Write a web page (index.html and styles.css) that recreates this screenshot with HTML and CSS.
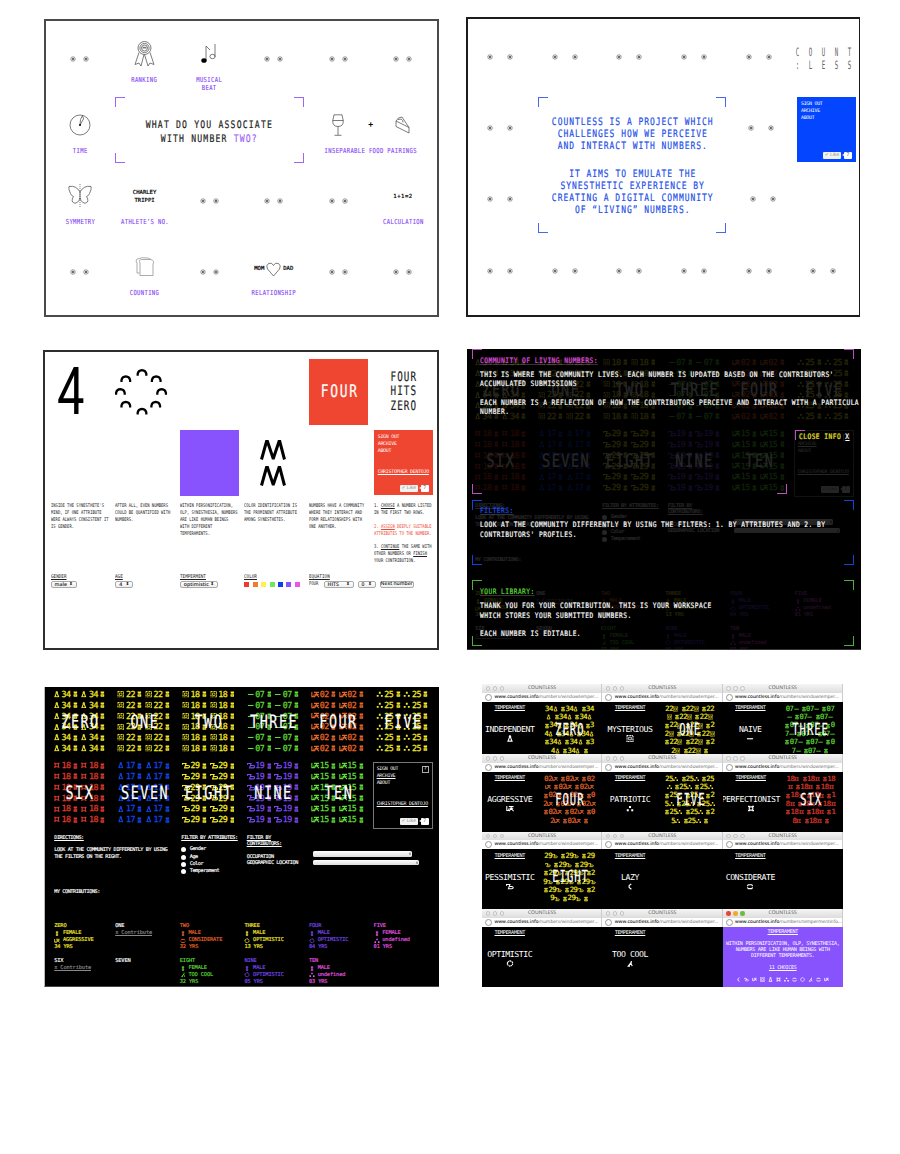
FILE: index.html
```html
<!DOCTYPE html>
<html lang="en">
<head>
<meta charset="utf-8">
<title>Countless</title>
<link rel="stylesheet" href="styles.css">
</head>
<body>
<svg class="defs" aria-hidden="true">
  <symbol id="eye" viewBox="0 0 6 6"><circle cx="3" cy="3" r="2.3" fill="#ddd" stroke="#777" stroke-width=".6"/><circle cx="3" cy="3" r="1" fill="#444"/></symbol>
  <symbol id="g-flask" viewBox="0 0 8 8"><path d="M3 1h2M3.300 1v2L1.700 7h4.600L4.700 3V1"/></symbol>
  <symbol id="g-grid" viewBox="0 0 8 8"><path d="M.600.600h6.800v6.800H.600z" stroke-dasharray="1.200 .600"/><path d="M2.500 2.500h3v3h-3z" stroke-width=".9"/></symbol>
  <symbol id="g-dash" viewBox="0 0 8 8"><path d="M.500 4.300h7"/></symbol>
  <symbol id="g-wk" viewBox="0 0 10 8"><path d="M1 1v5.500h2.500V4M3.500 1.500h6M6.500 1.500v2.500M6.500 4 3.800 7.200M6.500 4l3 3.200M4.500 3.800h4.500"/></symbol>
  <symbol id="g-dots" viewBox="0 0 8 8"><path d="M2.900 1h2.300v2.300H2.900zM.300 4.800h2.300v2.300H.300zM5.400 4.800h2.300v2.300H5.400z" fill="currentColor" stroke="none"/></symbol>
  <symbol id="g-sq" viewBox="0 0 8 8"><path d="M2 2.200h4v3.600H2zM.600 1.600h2M5.400 1.600h2M.600 6.400h2M5.400 6.400h2"/></symbol>
  <symbol id="g-yer" viewBox="0 0 10 8"><path d="M.600 3.200V1.600h4.200L3 6.800h4.200q1.800-.200 1.800-1.500T7.200 4H4"/></symbol>
  <symbol id="g-moon" viewBox="0 0 8 8"><path d="M5.500 1 3 3v2.200l2.600 2"/></symbol>
  <symbol id="g-pill" viewBox="0 0 8 8"><path d="M1 3.500 2 2h4l1 1.500M1 5l1 1.500h4L7 5"/></symbol>
  <symbol id="g-sun" viewBox="0 0 8 8"><path d="M4 .900l1.500.900 1.400.900v2.600L5.500 6.300 4 7.200l-1.500-.900-1.400-1V2.700L2.500 1.800z" stroke-dasharray="1.800 .500"/></symbol>
  <symbol id="g-cool" viewBox="0 0 8 8"><path d="M5.500 1v1.500L2 7h2M5 3.500 6.500 7"/></symbol>
  <symbol id="g-sex" viewBox="0 0 6 8"><path d="M.600 1.500h4.800M1.700 3h2.600M.600 5h4.800M.600 6.800h4.800M1.500 1v2.200M4.500 1v2.200M1.200 4.800v2M4.800 4.800v2"/></symbol>
  <symbol id="g-man" viewBox="0 0 6 8"><path d="M2 1h2v2H2zM3 3v1M2 4.600h2v2H2z"/></symbol>
</svg>

<main class="sheet">
  <section class="panel associate">
    <div class="cell"><span class="eyes"></span></div>
    <div class="cell">
      <div class="art"><svg width="21" height="28" viewBox="0 0 21 28"><g class="line"><circle cx="10.500" cy="8" r="6.500"/><circle cx="10.500" cy="8" r="4.600"/><circle cx="10.500" cy="8" r="3"/><path d="M8.500 8h4M8.800 7.300h3.500M5 12.500 1 24.500l4-1.500 2 3 3-11.500M16 12.500l4 12-4-1.500-2 3-3.500-11.500"/></g></svg></div>
      <div class="label">RANKING</div>
    </div>
    <div class="cell">
      <div class="art"><svg width="16" height="22" viewBox="0 0 16 22"><g class="line"><path d="M5 17V3l4 4M14 1v13"/><ellipse cx="11.500" cy="13.500" rx="2.600" ry="2.200"/></g><ellipse cx="3" cy="17.500" rx="2.700" ry="2.300"/></svg></div>
      <div class="label">MUSICAL<br>BEAT</div>
    </div>
    <div class="cell"><span class="eyes"></span></div>
    <div class="cell"><span class="eyes"></span></div>
    <div class="cell"><span class="eyes"></span></div>

    <div class="cell">
      <div class="art"><svg width="22" height="22" viewBox="0 0 22 22"><g class="line"><circle cx="11" cy="11" r="10"/><path d="M11 11 11.500 5.500l2-4L14.500 5z"/></g><circle cx="11" cy="11" r="1"/></svg></div>
      <div class="label">TIME</div>
    </div>
    <div class="question frame"><div>WHAT DO YOU ASSOCIATE<br>WITH NUMBER <b>TWO?</b></div></div>
    <div class="cell pairing">
      <div class="trio">
        <svg width="12" height="22" viewBox="0 0 12 22"><g class="line"><path d="M2 .800h8L11.300 7q0 5.500-5.300 5.500T.700 7zM.800 6.500h10.400M6 12.500V21M2.500 21.300h7"/></g></svg>
        <span class="plus">+</span>
        <svg width="15" height="18" viewBox="0 0 15 18"><g class="line"><path d="M1 5 14 11.500V17L1 10.500zM1 5Q3 1 7 1l7 10.500M3 3.500Q8 2 8 6.500"/></g></svg>
      </div>
      <div class="label">INSEPARABLE FOOD PAIRINGS</div>
    </div>

    <div class="cell">
      <div class="art"><svg width="24" height="23" viewBox="0 0 24 23"><g class="line"><path d="M12 8Q8 1 1 2.500q-1 2 1.500 7 1 2.500 3 3-3 5 .500 6.500 4 1 6-5 2 6 6 5 3.500-1.500.500-6.500 2-.500 3-3 2.500-5 1.500-7Q16 1 12 8zM12 8v6"/><path d="M12 0v23" stroke-dasharray="1 1"/></g></svg></div>
      <div class="label">SYMMETRY</div>
    </div>
    <div class="cell">
      <div class="art name">CHARLEY<br>TRIPPI</div>
      <div class="label">ATHLETE’S NO.</div>
    </div>
    <div class="cell"><span class="eyes"></span></div>
    <div class="cell"><span class="eyes"></span></div>
    <div class="cell"><span class="eyes"></span></div>
    <div class="cell">
      <div class="art name sum">1+1=2</div>
      <div class="label">CALCULATION</div>
    </div>

    <div class="cell"><span class="eyes"></span></div>
    <div class="cell">
      <div class="art"><svg width="20" height="20" viewBox="0 0 20 20"><g class="line soft"><path d="M5 6Q3 3 6.500 2.500h9Q20 3.500 18 7v11.500H5zM4.500 16H2V6Q0 4 2 2 7 0 13 1l3 1.500"/></g></svg></div>
      <div class="label">COUNTING</div>
    </div>
    <div class="cell"><span class="eyes"></span></div>
    <div class="cell">
      <div class="art family"><span>MOM</span><svg width="15" height="15" viewBox="0 0 15 15"><g class="line"><path d="M7.500 14 1.500 7Q-.500 3.500 2.500 1.500q3.500-1.500 5 2 1.500-3.500 5-2 3 2 1 5.500z"/></g></svg><span>DAD</span></div>
      <div class="label">RELATIONSHIP</div>
    </div>
    <div class="cell"><span class="eyes"></span></div>
    <div class="cell"><span class="eyes"></span></div>
  </section>

  <section class="panel about">
    <div class="cell"><span class="eyes"></span></div>
    <div class="cell"><span class="eyes"></span></div>
    <div class="cell"><span class="eyes"></span></div>
    <div class="cell"><span class="eyes"></span></div>
    <div class="cell"><span class="eyes"></span></div>
    <div class="logo"><i>C</i><i>O</i><i>U</i><i>N</i><i>T</i><i>:</i><i>L</i><i>E</i><i>S</i><i>S</i></div>
    <div class="cell"><span class="eyes"></span></div>
    <div class="mission frame">
      <p>COUNTLESS IS A PROJECT WHICH<br>CHALLENGES HOW WE PERCEIVE<br>AND INTERACT WITH NUMBERS.</p>
      <p>IT AIMS TO EMULATE THE<br>SYNESTHETIC EXPERIENCE BY<br>CREATING A DIGITAL COMMUNITY<br>OF “LIVING” NUMBERS.</p>
    </div>
    <div class="cell shift-a"><span class="eyes"></span></div>
    <div class="account blue"><div>SIGN OUT</div><div>ARCHIVE</div><div>ABOUT</div><div class="like"><span>✓ Like</span><em>7</em></div></div>
    <div class="cell"><span class="eyes"></span></div>
    <div class="cell shift-b"><span class="eyes"></span></div>
    <div class="cell"></div>
    <div class="cell"><span class="eyes"></span></div>
    <div class="cell"><span class="eyes"></span></div>
    <div class="cell"><span class="eyes"></span></div>
    <div class="cell"><span class="eyes"></span></div>
    <div class="cell"><span class="eyes"></span></div>
    <div class="cell"><span class="eyes"></span></div>
  </section>

  <section class="panel contribute">
    <div class="tiles">
      <div class="tile four"><span>4</span></div>
      <div class="tile arches"><svg width="54" height="48" viewBox="0 0 54 48"><g id="arches"></g></svg></div>
      <div class="tile"></div>
      <div class="tile"></div>
      <div class="tile red"><span class="word">FOUR</span></div>
      <div class="tile stack"><span>FOUR</span><span>HITS</span><span>ZERO</span></div>
      <div class="tile"></div>
      <div class="tile"></div>
      <div class="tile violet"></div>
      <div class="tile zigzag"><svg width="26" height="48" viewBox="0 0 26 48"><g fill="none" stroke="#000" stroke-width="3"><path d="M1.500 20.500 6.500 2.500h1L13 19h.500L19 2.500h.800l4.700 18M1.500 46.500l5-18h1L13 45h.500L19 28.500h.800l4.700 18"/></g></svg></div>
      <div class="tile"></div>
      <div class="account red"><div>SIGN OUT</div><div>ARCHIVE</div><div>ABOUT</div><div class="user"><u>CHRISTOPHER DENTOJO</u></div><div class="like"><span>✓ Like</span><em>7</em></div></div>
    </div>
    <div class="notes">
      <p>INSIDE THE SYNESTHETE'S<br>MIND, IF ONE ATTRIBUTE<br>WERE ALWAYS CONSISTENT IT<br>IS GENDER.</p>
      <p>AFTER ALL, EVEN NUMBERS<br>COULD BE QUANTIFIED WITH<br>NUMBERS.</p>
      <p>WITHIN PERSONIFICATION,<br>OLP, SYNESTHESIA, NUMBERS<br>ARE LIKE HUMAN BEINGS<br>WITH DIFFERENT<br>TEMPERAMENTS.</p>
      <p>COLOR IDENTIFICATION IS<br>THE PROMINENT ATTRIBUTE<br>AMONG SYNESTHETES.</p>
      <p>NUMBERS HAVE A COMMUNITY<br>WHERE THEY INTERACT AND<br>FORM RELATIONSHIPS WITH<br>ONE ANOTHER.</p>
      <p>1. <u>CHOOSE</u> A NUMBER LISTED<br>IN THE FIRST TWO ROWS.<br><br><span class="hot">2. <u>ASSIGN</u> DEEPLY SUITABLE<br>ATTRIBUTES TO THE NUMBER.</span><br><br>3. <u>CONTINUE</u> THE SAME WITH<br>OTHER NUMBERS OR <u>FINISH</u><br>YOUR CONTRIBUTION.</p>
    </div>
    <div class="fields">
      <div><u>GENDER</u><div class="row"><span class="select w26">male</span></div></div>
      <div><u>AGE</u><div class="row"><span class="select w18">4</span></div></div>
      <div><u>TEMPERMENT</u><div class="row"><span class="select w38">optimistic</span></div></div>
      <div><u>COLOR</u><div class="row swatches"><i class="s1"></i><i class="s2"></i><i class="s3"></i><i class="s4"></i><i class="s5"></i><i class="s6"></i><i class="s7"></i></div></div>
      <div><u>EQUATION</u><div class="row eq"><span class="tiny">FOUR</span><span class="select w30">HITS</span><span class="select w18">0</span><span class="button">Next number</span></div></div>
    </div>
  </section>

  <section class="panel help">
    <div class="community dim"></div>
    <div class="guide">
      <div class="guide-top">
        <h2>COMMUNITY OF LIVING NUMBERS:</h2>
        <p>THIS IS WHERE THE COMMUNITY LIVES. EACH NUMBER IS UPDATED BASED ON THE CONTRIBUTORS'<br>ACCUMULATED SUBMISSIONS</p>
        <p>EACH NUMBER IS A REFLECTION OF HOW THE CONTRIBUTORS PERCEIVE AND INTERACT WITH A PARTICULA<br>NUMBER.</p>
        <div class="close">CLOSE INFO <u>X</u></div>
      </div>
      <div class="guide-filters frame">
        <h2>FILTERS:</h2>
        <p>LOOK AT THE COMMUNITY DIFFERENTLY BY USING THE FILTERS: 1. BY ATTRIBUTES AND 2. BY<br>CONTRIBUTORS' PROFILES.</p>
      </div>
      <div class="guide-library frame">
        <h2>YOUR LIBRARY:</h2>
        <p>THANK YOU FOR YOUR CONTRIBUTION. THIS IS YOUR WORKSPACE<br>WHICH STORES YOUR SUBMITTED NUMBERS.</p>
        <p>EACH NUMBER IS EDITABLE.</p>
      </div>
    </div>
  </section>

  <section class="panel archive">
    <div class="community"></div>
  </section>

  <section class="windows" id="windows"></section>
</main>

<template id="community">
  <div class="numbers"></div>
  <div class="filters">
    <div><u>DIRECTIONS:</u><p>LOOK AT THE COMMUNITY DIFFERENTLY BY USING<br>THE FILTERS ON THE RIGHT.</p></div>
    <div><u>FILTER BY ATTRIBUTES:</u><ul><li>Gender</li><li>Age</li><li>Color</li><li>Temperament</li></ul></div>
    <div><u>FILTER BY<br>CONTRIBUTORS:</u><p>OCCUPATION<br>GEOGRAPHIC LOCATION</p></div>
    <div class="bars"><span>⬍</span><span>⬍</span></div>
  </div>
  <div class="mine">MY CONTRIBUTIONS:</div>
  <div class="library"></div>
</template>
<script src="script.js"></script>
</body>
</html>
```

FILE: styles.css
```css
* { box-sizing: border-box; }
body {
  margin: 0;
  background: #fff;
  color: #222;
  font-family: "DejaVu Sans Mono", "Liberation Mono", monospace;
  text-rendering: geometricPrecision;
}
p, h2, ul { margin: 0; padding: 0; }
.defs { position: absolute; width: 0; height: 0; }

.sheet {
  display: grid;
  grid-template-columns: 396px 395px;
  grid-template-rows: 332px 335px 303px;
  column-gap: 27px;
  width: 900px;
  height: 1154px;
  padding: 17px 0 0 43px;
}
.panel { overflow: hidden; white-space: nowrap; }

/* corner brackets */
.frame {
  --c: #9a68f8;
  --l: linear-gradient(var(--c) 0 0);
  background:
    var(--l) 0 0 / 10px 1px, var(--l) 0 0 / 1px 10px,
    var(--l) 100% 0 / 10px 1px, var(--l) 100% 0 / 1px 10px,
    var(--l) 0 100% / 10px 1px, var(--l) 0 100% / 1px 10px,
    var(--l) 100% 100% / 10px 1px, var(--l) 100% 100% / 1px 10px;
  background-repeat: no-repeat;
}

.eyes { display: flex; gap: 7px; }
.eyes svg { width: 6px; height: 6px; }

.associate, .about {
  display: grid;
  grid-template-columns: repeat(6, 64.6px);
  grid-template-rows: repeat(4, 71px);
}
.associate {
  width: 395px;
  height: 298px;
  margin: 2px 0 0 1px;
  border: 2px solid #4a4a4a;
  padding: 2.5px 0 0 1.700px;
}
.cell { display: flex; flex-direction: column; align-items: center; }
.cell > .eyes { margin: auto; }
.art { display: flex; align-items: center; justify-content: center; height: 32px; margin-top: 14px; }
.label {
  margin-top: 6.200px;
  color: #8a4df5;
  font-size: 6.900px;
  line-height: 8.700px;
  letter-spacing: .470px;
  text-align: center;
  transform: scaleX(.800);
  -webkit-text-stroke: .150px;
}
.line { fill: none; stroke: #444; stroke-width: .7; }
.line.soft { stroke: #888; }
.name, .family { font-size: 5.600px; line-height: 7.500px; letter-spacing: 0; text-align: center; color: #000; -webkit-text-stroke: .200px; }
.name { padding-top: 4px; }
.sum { letter-spacing: .500px; }
.family span { width: 12px; letter-spacing: 0; }
.family { padding-top: 6px; gap: 1px; }
.question { grid-column: span 3; margin: 2.500px; padding-top: 20.500px; }
.question div {
  font-size: 10.400px;
  line-height: 14px;
  letter-spacing: 1.520px;
  text-align: center;
  color: #222;
  transform: scaleX(.780);
  -webkit-text-stroke: .200px;
}
.question b { font-weight: 400; color: #9a68f8; }
.pairing { grid-column: span 2; }
.trio { display: grid; grid-template-columns: repeat(3, 32.300px); justify-items: center; align-items: center; height: 32px; margin-top: 14px; }
.plus { font-size: 8px; font-weight: 700; color: #000; }

.about {
  width: 394px;
  height: 300px;
  border: 2px solid #1c1c1c;
  border-right-width: 1px;
  padding-top: 2.500px;
  grid-template-rows: repeat(4, 71.200px);
}
.about .eyes { gap: 14px; transform: translateX(0); }
.logo { display: grid; grid-template-columns: repeat(5, 13px); grid-auto-rows: 13px; align-content: start; padding: 24px 0 0 0; margin-left: .500px; }
.logo i { font: 11.500px/13px "DejaVu Sans Mono", monospace; color: #666; text-align: center; transform: scaleX(.500); }
.mission {
  --c: #4a66f0;
  grid-column: 2 / 5;
  grid-row: 2 / 4;
  margin: 4.500px 0 2px 5px;
  padding-top: 20px;
}
.mission p {
  width: 130%;
  margin-left: -14.500%;
  color: #2350ea;
  font-size: 10.200px;
  line-height: 12px;
  letter-spacing: 1.270px;
  text-align: center;
  transform: scaleX(.780);
  -webkit-text-stroke: .200px;
}
.mission p + p { margin-top: 15.500px; }
.about .shift-a .eyes { transform: translateX(2px); }
.about .shift-b .eyes { transform: translateX(4px); }

.account {
  display: flex;
  flex-direction: column;
  width: 59px;
  height: 65px;
  padding: 4px 4px 3px;
  color: #fff;
  font-size: 4.900px;
  line-height: 7px;
  letter-spacing: -.250px;
}
.account.blue { background: #0446ff; margin: 4.500px 0 0 6px; }
.account.red { background: #ef4631; }
.account .user { margin-top: 14px; }
.like { display: flex; gap: 3px; justify-content: flex-end; margin-top: auto; font-family: "Open Sans", sans-serif; letter-spacing: 0; line-height: 7px; }
.like span { width: 18px; background: #f2f2f2; color: #888; border-radius: 1px; text-align: center; }
.like em { position: relative; width: 8px; background: #fff; color: #333; font-style: normal; text-align: center; border-radius: 1px; }
.like em::before { content: ""; position: absolute; left: -2px; top: 2px; border: 1.500px solid transparent; border-left: 0; border-right: 2px solid #fff; }

.contribute {
  width: 396px;
  height: 300px;
  margin-top: 1px;
  border: 2px solid #2e2e2e;
  padding: 7px 0 0 5.600px;
}
.tiles { display: grid; grid-template-columns: repeat(6, 59px); grid-template-rows: repeat(2, 65.500px); column-gap: 5.640px; row-gap: 5.700px; }
.tile { display: flex; align-items: center; justify-content: center; }
.red { background: #ef4631; }
.violet { background: #8852fc; }
.four { justify-content: flex-start; }
.four span { font: 400 66px/66px Roboto, sans-serif; color: #000; transform: scaleX(.740); transform-origin: left; margin: 2px 0 0 6px; }
.arches { justify-content: flex-start; padding-right: 6px; }
.zigzag { padding-right: 2px; }
.red .word { color: #fff; font-size: 17.500px; letter-spacing: 2.300px; margin-right: -2.300px; transform: scaleX(.740); }
.stack { flex-direction: column; padding-top: 2px; }
.stack span { font-size: 13px; line-height: 14.600px; letter-spacing: 1.600px; margin-right: -1.600px; transform: scaleX(.710); -webkit-text-stroke: .200px; }
.notes { display: grid; grid-template-columns: repeat(6, 64.640px); height: 71px; margin-top: 7px; }
.notes p, .tiny, .fields u { font-size: 5px; line-height: 6.950px; transform: scaleX(.765); transform-origin: left; }
.hot { color: #ef4631; }
.fields { display: grid; grid-template-columns: repeat(5, 64.640px); font-size: 5px; }
.fields u { display: block; width: max-content; line-height: 7px; font-size: 5.200px; transform: scaleX(.830); }
.row { display: flex; align-items: center; gap: 4px; height: 8px; margin-top: 0; font-family: "Open Sans", sans-serif; }
.select, .button { flex: none; height: 7.500px; border: .600px solid #aaa; border-radius: 2px; background: linear-gradient(#fff, #eee); font: 600 5.200px/5.500px "Open Sans", sans-serif; color: #222; padding: 0 3px; }
.select { display: flex; justify-content: space-between; }
.select::after { content: "⬍"; font-size: 4px; }
.button { width: 34px; padding: 0; text-align: center; font-size: 5px; }
.w18 { width: 18px; } .w26 { width: 26px; } .w30 { width: 30px; } .w38 { width: 38px; }
.swatches { gap: 3.400px; }
.swatches i { width: 5px; height: 5px; }
.s1 { background: #ef3b2c; } .s2 { background: #f4792b; } .s3 { background: #fff04d; } .s4 { background: #6fe85a; }
.s5 { background: #0a3ff0; } .s6 { background: #8852fc; } .s7 { background: #e858e8; }
.tiny { font-family: "DejaVu Sans Mono", monospace; width: 10.500px; }

/* community archive */
.archive {
  width: 395px;
  height: 300px;
  margin: 3px 0 0 1px;
  background: #000;
  border-left: 1px solid #bbb;
  border-bottom: 1px solid #444;
}
.community { color: #fff; padding: 2px 0 0 1.700px; }
.glyph { width: 6px; height: 6px; fill: none; stroke: currentColor; stroke-width: 1.300; }
.numbers { display: grid; grid-template-columns: repeat(6, 64.600px); grid-template-rows: repeat(2, 71.200px); }
.number { display: grid; justify-items: center; align-items: start; }
.number > * { grid-area: 1 / 1; }
.pattern { display: grid; grid-template-columns: repeat(2, 27.600px); grid-auto-rows: 10.800px; margin-left: 3px; }
.unit { display: flex; align-items: center; font-size: 8.300px; letter-spacing: -.500px; line-height: 10.800px; -webkit-text-stroke: .250px; }
.unit .glyph { flex: none; width: 7.500px; height: 6.500px; }
.unit .wide { width: 8.500px; height: 7px; margin-right: -1px; }
.unit b { width: 11px; font-weight: 400; text-align: center; }
.unit .sex { width: 4.800px; height: 6px; margin-left: 1.500px; stroke-width: 1.400; }
.word { position: relative; font-size: 18.500px; color: #fff; letter-spacing: 2.100px; margin-right: -2.100px; transform: scaleX(.725); line-height: 20px; -webkit-text-stroke: .200px; }
.number .word { margin-top: 24px; }
.archive .account, .help .account { border: 1px solid #777; height: 67px; width: 60px; margin: 1.500px 0 0 3px; padding: 3px; }
.account .first { display: flex; justify-content: space-between; }
.account .q { border: 1px solid #aaa; width: 7px; height: 7px; line-height: 5px; text-align: center; }
.filters { display: grid; grid-template-columns: 127px 65.500px 66px auto; height: 53px; padding: 3.500px 0 0 7.500px; font-size: 5.200px; line-height: 6.400px; letter-spacing: -.430px; -webkit-text-stroke: .150px; }
.filters p { margin-top: 6px; }
.filters ul { list-style: none; margin-top: 5px; line-height: 7.200px; }
.filters li { display: flex; align-items: center; gap: 3.500px; height: 7.250px; }
.filters li::before { content: ""; width: 5px; height: 5px; border-radius: 50%; background: #fff; }
.bars { display: grid; align-content: start; gap: 2.500px; padding-top: 16.500px; }
.bars span { width: 99px; height: 5.700px; border-radius: 1.500px; background: linear-gradient(#fff, #ddd); color: #444; font-size: 4px; line-height: 5px; text-align: right; padding-right: 1px; }
.bars span + span { width: 106px; }
.mine { padding: 5px 0 0 7.500px; font-size: 5.200px; line-height: 6px; letter-spacing: -.430px; height: 39px; -webkit-text-stroke: .150px; }
.library { display: grid; grid-template-columns: 61px repeat(5, 64.600px); grid-auto-rows: 34.500px; padding-left: 7.500px; font-size: 5.300px; line-height: 6.950px; letter-spacing: -.120px; -webkit-text-stroke: .150px; }
.library .line-item { display: flex; align-items: center; height: 6.950px; }
.library .glyph { width: 6px; height: 5.500px; margin-right: 2.700px; }
.library u { color: #888; }
.yellow { color: #f4ea2a; } .green { color: #5fdc36; } .orange { color: #e8662a; } .scarlet { color: #e03a2a; }
.cobalt { color: #1046f0; } .purple { color: #7a48ee; } .pink { color: #e255e0; } .white { color: #fff; }

/* instructions over the archive */
.help { display: grid; width: 394px; height: 301px; margin-left: 1px; background: #000; border-bottom: 1px solid #333; }
.help > * { grid-area: 1 / 1; min-width: 0; }
.dim { opacity: .15; padding: 8px 0 0 .700px; }
.guide { position: relative; display: flex; flex-direction: column; padding-left: 5px; color: #fff; font-size: 7.500px; line-height: 9.400px; letter-spacing: .590px; -webkit-text-stroke: .200px; }
.guide h2 { font: inherit; text-decoration: underline; text-decoration-color: rgba(255, 255, 255, .2); margin-bottom: 5px; }
.guide h2, .guide p, .close { width: max-content; transform: scaleX(.825); transform-origin: left; }
.guide p + p { margin-top: 9.200px; }
.guide-top {
  --c: #c04fc4;
  --l: linear-gradient(var(--c) 0 0);
  display: flex;
  flex-direction: column;
  height: 145px;
  padding: 6.500px 0 0 8px;
  background:
    var(--l) 0 0 / 10px 1px, var(--l) 0 0 / 1px 10px,
    var(--l) 372px 0 / 10px 1px, var(--l) 381px 0 / 1px 10px,
    var(--l) 0 100% / 10px 1px, var(--l) 0 100% / 1px 10px,
    var(--l) 305px 100% / 10px 1px, var(--l) 314px 100% / 1px 10px,
    var(--l) 323px 81px / 10px 1px, var(--l) 323px 81px / 1px 10px;
  background-repeat: no-repeat;
}
.guide-top h2 { color: #e04fe0; }
.close { margin: auto 0 53px 319px; color: #f4ea2a; }
.close u { color: #fff; }
.guide-filters, .guide-library { width: 382px; padding: 6px 0 0 8px; }
.guide-filters { --c: #1244d8; height: 65px; margin-top: 6px; }
.guide-filters h2 { color: #1d50f0; }
.guide-library { --c: #4fae3c; height: 66px; margin-top: 15px; padding-top: 7px; }
.guide-library h2 { color: #5fdc36; }

/* pop-up windows */
.windows { display: grid; grid-template-columns: repeat(3, 120.300px); grid-template-rows: 70px 77.700px 77.500px 77.800px; margin-left: 16px; width: 361px; height: 303px; white-space: nowrap; background: #000; }
.window { display: flex; flex-direction: column; min-width: 0; min-height: 0; overflow: hidden; }
.bar { display: grid; grid-template-columns: 40px 33px 1fr; align-items: center; flex: none; height: 8.500px; padding-left: 3.500px; background: linear-gradient(#f5f5f5, #ddd); font: 5px/8px "Open Sans", sans-serif; color: #444; text-align: center; border-right: 1px solid #ccc; }
.lights { display: flex; gap: 2.600px; }
.lights i { width: 4.500px; height: 4.500px; border: 1px solid #c4c4c4; border-radius: 50%; background: #eee; }
.active .lights i { border: 0; }
.active .lights i:nth-child(1) { background: #e8433a; }
.active .lights i:nth-child(2) { background: #f0a830; }
.active .lights i:nth-child(3) { background: #6cbb3c; }
.url { flex: none; height: 9px; padding-left: 3px; display: flex; align-items: center; gap: 2.500px; background: #fff; border-right: 1px solid #ccc; font: 4.680px/9px "Open Sans", sans-serif; color: #666; }
.url b { font-weight: 600; color: #222; }
.url::before { content: ""; flex: none; width: 5px; height: 5px; border: 1px solid #999; border-radius: 50%; }
.page { display: grid; grid-template-columns: minmax(55.500px, max-content) 64px; flex: 1; min-height: 0; background: #000; color: #fff; }
.mood { display: flex; flex-direction: column; align-items: center; min-width: 0; }
.mood u { margin-top: 3.500px; font-size: 5.200px; line-height: 7px; letter-spacing: -.350px; }
.mood span { margin-top: 12px; font-size: 8.200px; line-height: 10px; letter-spacing: -.440px; }
.mood .glyph { margin-top: 1px; width: 8px; height: 7px; stroke-width: 1.300; }
.swarm { display: grid; justify-items: center; align-items: start; height: 52px; }
.swarm > * { grid-area: 1 / 1; }
.lines { padding-top: 3px; font-size: 7.200px; line-height: 8.400px; letter-spacing: -.350px; text-align: center; -webkit-text-stroke: .200px; }
.lines > div { display: flex; justify-content: center; align-items: center; height: 8.450px; white-space: pre; }
.lines span { width: 3px; }
.lines .glyph { flex: none; width: 5.200px; height: 6px; }
.lines .wide { width: 6px; }
.lines .sex { width: 4px; margin-right: .300px; }
.swarm .word { margin-top: 18px; width: auto; font-size: 16.500px; letter-spacing: 1.500px; margin-right: -1.500px; transform: scaleX(.640); }
.info { flex: 1; background: #8852fc; color: #fff; text-align: center; font-size: 5.100px; line-height: 6.100px; letter-spacing: -.300px; padding-top: 2px; }
.info p { margin-top: 6px; }
.info .row { justify-content: center; gap: 3px; margin-top: 4px; }
.info .row .glyph { width: 5px; height: 5px; }
```

FILE: script.js
```js
const glyph = (id, cls = '') => `<svg class="glyph ${cls} ${id === 'wk' || id === 'yer' ? 'wide' : ''}"><use href="#g-${id}"/></svg>`;

document.querySelectorAll('.eyes').forEach(e => {
  e.innerHTML = '<svg><use href="#eye"/></svg><svg><use href="#eye"/></svg>';
});

document.getElementById('arches').innerHTML =
  [[27.5, 0], [11, 6.5], [42, 6.5], [5.5, 19.5], [47.5, 19.5], [11, 32.5], [41.5, 32.5], [27.5, 39.5]]
    .map(([x, y]) => `<path d="M${x - 4.4} ${y + 7.4}v-2q.6-3.6 4.4-3.8 3.8.2 4.4 3.8v2" fill="none" stroke="#000" stroke-width="2.3"/>`).join('');

const numbers = [
  ['ZERO', 'flask', '34', 'yellow'], ['ONE', 'grid', '22', 'yellow'], ['TWO', 'grid', '18', 'yellow'],
  ['THREE', 'dash', '07', 'green'], ['FOUR', 'wk', '02', 'orange'], ['FIVE', 'dots', '25', 'yellow'],
  ['SIX', 'sq', '18', 'scarlet'], ['SEVEN', 'flask', '17', 'cobalt'], ['EIGHT', 'yer', '29', 'yellow'],
  ['NINE', 'yer', '19', 'purple'], ['TEN', 'wk', '15', 'green']
];
const account = `<div class="account"><div class="first">SIGN OUT<span class="q">?</span></div><div><u>ARCHIVE</u></div><div>ABOUT</div>
  <div class="user"><u>CHRISTOPHER DENTOJO</u></div><div class="like"><span>✓ Like</span><em>7</em></div></div>`;

const library = [
  ['ZERO', 'yellow', 'FEMALE', 'wk', 'AGGRESSIVE', '34'], ['ONE', 'white'],
  ['TWO', 'orange', 'MALE', 'pill', 'CONSIDERATE', '32'], ['THREE', 'yellow', 'MALE', 'sun', 'OPTIMISTIC', '13'],
  ['FOUR', 'purple', 'MALE', 'sun', 'OPTIMISTIC', '04'], ['FIVE', 'pink', 'FEMALE', 'dots', 'undefined', '01'],
  ['SIX', 'white'], ['SEVEN', 'white'], ['EIGHT', 'green', 'FEMALE', 'cool', 'TOO COOL', '32'],
  ['NINE', 'purple', 'MALE', 'sun', 'OPTIMISTIC', '05'], ['TEN', 'pink', 'MALE', 'dots', 'undefined', '03']
];

document.querySelectorAll('.community').forEach(el => {
  el.append(document.getElementById('community').content.cloneNode(true));
  el.querySelector('.numbers').innerHTML = numbers.map(([name, g, n, color]) => {
    const unit = `<span class="unit">${glyph(g)}<b>${n}</b>${glyph('sex', 'sex')}</span>`;
    return `<div class="number"><div class="pattern ${color}">${unit.repeat(12)}</div><span class="word">${name}</span></div>`;
  }).join('') + account;
  el.querySelector('.library').innerHTML = library.map(([name, color, sex, g, mood, age]) => {
    if (!sex) return `<div class="${color}">${name}${name === 'SEVEN' ? '' : '<br><u>x Contribute</u>'}</div>`;
    return `<div class="${color}">${name}<div class="line-item">${glyph('man')}${sex}</div><div class="line-item">${glyph(g)}${mood}</div>${age} YRS</div>`;
  }).join('');
});

const windows = [
  ['INDEPENDENT', 'flask', 0], ['MYSTERIOUS', 'grid', 1], ['NAIVE', 'dash', 3],
  ['AGGRESSIVE', 'wk', 4], ['PATRIOTIC', 'dots', 5], ['PERFECTIONIST', 'sq', 6],
  ['PESSIMISTIC', 'yer', 8], ['LAZY', 'moon'], ['CONSIDERATE', 'pill'],
  ['OPTIMISTIC', 'sun'], ['TOO COOL', 'cool']
];
const chrome = (path, body, cls = '') => `<article class="window ${cls}">
  <div class="bar"><span class="lights"><i></i><i></i><i></i></span><span>COUNTLESS</span></div>
  <div class="url"><span><b>www.countless.info</b>/numbers/${path}...</span></div>${body}</article>`;

/* a, b are the digits; G the mood glyph; S the gender glyph */
const rows = ['abG SabG Sab', 'G SabG SabG', 'SabG SabG Sa', 'bG SabG SabG', 'SabG SabG Sa', 'bG SabG S'];
const swarm = ([name, g, n, color]) => `<div class="swarm"><div class="lines ${color}">${rows.map(r =>
  '<div>' + [...r].map(c => ({ a: n[0], b: n[1], G: glyph(g), S: glyph('sex', 'sex'), ' ': '<span> </span>' }[c])).join('') + '</div>').join('')}</div>
  <span class="word">${name}</span></div>`;

document.getElementById('windows').innerHTML = windows.map(([mood, g, i]) =>
  chrome('windowtemper', `<div class="page"><div class="mood"><u>TEMPERAMENT</u><span>${mood}</span>${glyph(g)}</div>${i === undefined ? '' : swarm(numbers[i])}</div>`)
).join('') + chrome('tempermentinfo', `<div class="info"><u>TEMPERAMENT</u>
  <p>WITHIN PERSONIFICATION, OLP, SYNESTHESIA,<br>NUMBERS ARE LIKE HUMAN BEINGS WITH<br>DIFFERENT TEMPERAMENTS.</p>
  <p><u>11 CHOICES</u></p>
  <div class="row">${['moon', 'yer', 'wk', 'grid', 'flask', 'sq', 'dots', 'pill', 'sun', 'cool', 'pill', 'wk'].map(g => glyph(g)).join('')}</div></div>`, 'active');
```
